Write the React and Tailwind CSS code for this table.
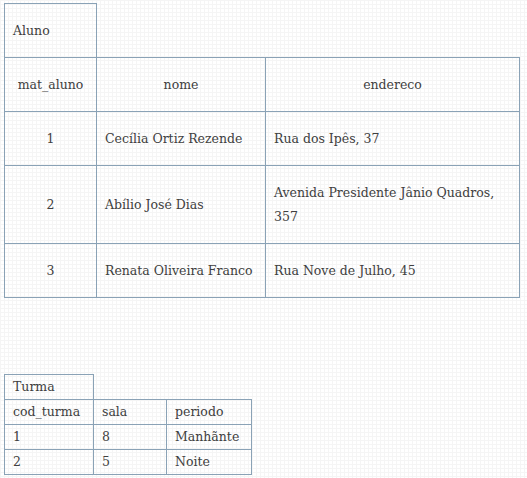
const alunos = [
  { mat: "1", nome: "Cecília Ortiz Rezende", endereco: "Rua dos Ipês, 37" },
  { mat: "2", nome: "Abílio José Dias", endereco: "Avenida Presidente Jânio Quadros, 357" },
  { mat: "3", nome: "Renata Oliveira Franco", endereco: "Rua Nove de Julho, 45" },
];

const turmas = [
  { cod: "1", sala: "8", periodo: "Manhãnte" },
  { cod: "2", sala: "5", periodo: "Noite" },
];

const cell = "border border-[#8aa2b6] px-2 pt-[15px] pb-[14px] leading-6 align-middle";
const small = "border border-[#8aa2b6] px-2 py-0 h-[25px] leading-5 align-middle";

export default function App() {
  return (
    <div
      className="min-h-screen w-full bg-white bg-[linear-gradient(#f5f5f5_1px,transparent_1px),linear-gradient(90deg,#f5f5f5_1px,transparent_1px)] bg-[size:4px_4px] pt-[3px] pl-[4px] text-[12.5px] text-[#404040]"
      style={{ fontFamily: '"DejaVu Serif", "Liberation Serif", serif' }}
    >
      <table className="border-collapse table-fixed w-[515px]">
        <colgroup>
          <col className="w-[92px]" />
          <col className="w-[169px]" />
          <col className="w-[254px]" />
        </colgroup>
        <tbody>
          <tr>
            <td className={cell}>Aluno</td>
          </tr>
          <tr>
            <td className={cell + " text-center"}>mat_aluno</td>
            <td className={cell + " text-center"}>nome</td>
            <td className={cell + " text-center"}>endereco</td>
          </tr>
          {alunos.map((a) => (
            <tr key={a.mat}>
              <td className={cell + " text-center"}>{a.mat}</td>
              <td className={cell}>{a.nome}</td>
              <td className={cell}>{a.endereco}</td>
            </tr>
          ))}
        </tbody>
      </table>

      <table className="border-collapse table-fixed w-[247px] mt-[76px]">
        <colgroup>
          <col className="w-[89px]" />
          <col className="w-[73px]" />
          <col className="w-[85px]" />
        </colgroup>
        <tbody>
          <tr>
            <td className={small}>Turma</td>
          </tr>
          <tr>
            <td className={small}>cod_turma</td>
            <td className={small}>sala</td>
            <td className={small}>periodo</td>
          </tr>
          {turmas.map((t) => (
            <tr key={t.cod}>
              <td className={small}>{t.cod}</td>
              <td className={small}>{t.sala}</td>
              <td className={small}>{t.periodo}</td>
            </tr>
          ))}
        </tbody>
      </table>
    </div>
  );
}
